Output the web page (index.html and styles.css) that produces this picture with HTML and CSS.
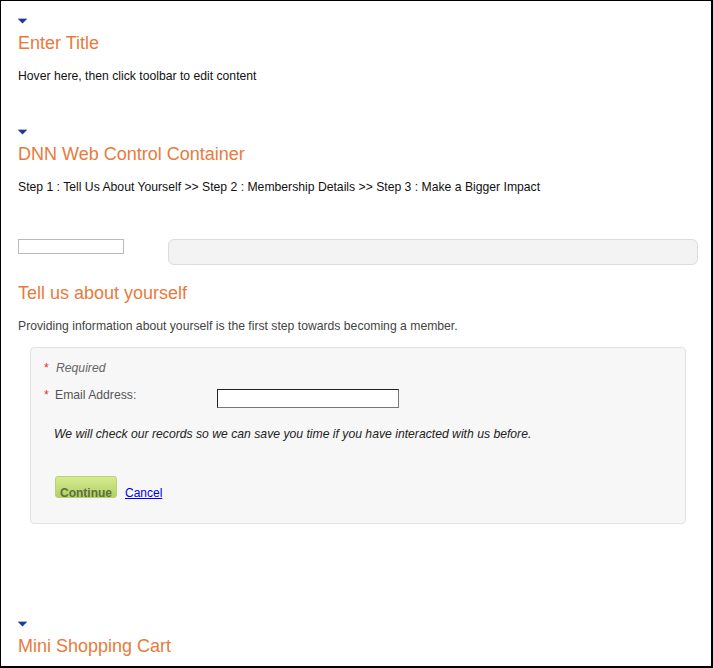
FILE: index.html
```html
<!DOCTYPE html>
<html>
<head>
<meta charset="utf-8">
<link rel="stylesheet" href="styles.css">
</head>
<body>
<div class="page">
  <div class="module">
    <svg class="tri" width="9" height="6" viewBox="0 0 9 6"><rect x="0" y="0" width="9" height="1" fill="#b4b8c8"/><polygon points="0,1 9,1 4.5,5.6" fill="#1b3b9a"/></svg>
    <h2 class="title">Enter Title</h2>
    <p class="text">Hover here, then click toolbar to edit content</p>
  </div>

  <div class="module module-2">
    <svg class="tri" width="9" height="6" viewBox="0 0 9 6"><rect x="0" y="0" width="9" height="1" fill="#b4b8c8"/><polygon points="0,1 9,1 4.5,5.6" fill="#1b3b9a"/></svg>
    <h2 class="title">DNN Web Control Container</h2>
    <p class="text">Step 1 : Tell Us About Yourself &gt;&gt; Step 2 : Membership Details &gt;&gt; Step 3 : Make a Bigger Impact</p>

    <div class="toprow">
      <div class="smallbox"></div>
      <div class="graybar"></div>
    </div>

    <h2 class="title title-tell">Tell us about yourself</h2>
    <p class="text text-gray">Providing information about yourself is the first step towards becoming a member.</p>

    <div class="panel">
      <div class="req"><span class="star">*</span><em>Required</em></div>
      <div class="field">
        <label class="label"><span class="star">*</span>Email Address:</label>
        <input class="input" type="text">
      </div>
      <p class="note">We will check our records so we can save you time if you have interacted with us before.</p>
      <div class="actions">
        <button class="btn" type="button">Continue</button>
        <a class="cancel" href="#">Cancel</a>
      </div>
    </div>
  </div>

  <div class="module module-3">
    <svg class="tri" width="9" height="6" viewBox="0 0 9 6"><rect x="0" y="0" width="9" height="1" fill="#b4b8c8"/><polygon points="0,1 9,1 4.5,5.6" fill="#1b3b9a"/></svg>
    <h2 class="title">Mini Shopping Cart</h2>
  </div>
</div>
</body>
</html>
```

FILE: styles.css
```css
html, body {
  margin: 0;
  padding: 0;
  background: #fff;
}

body {
  font-family: "Liberation Sans", Arial, sans-serif;
  font-size: 12.2px;
  color: #111;
}

.page {
  width: 713px;
  height: 668px;
  box-sizing: border-box;
  border-top: 1px solid #000;
  border-left: 1px solid #000;
  border-right: 2px solid #000;
  border-bottom: 2px solid #000;
  padding: 17px 0 0 17px;
  overflow: hidden;
}

.tri {
  display: block;
}

.title {
  margin: 8px 0 0;
  font-size: 18px;
  line-height: 22px;
  font-weight: normal;
  color: #e97a3c;
}

.text {
  margin: 15px 0 0;
  font-size: 12.2px;
  line-height: 15px;
  color: #111;
}

.text-gray {
  color: #444;
}

.module-2 {
  margin-top: 45px;
}

.toprow {
  display: flex;
  align-items: flex-start;
  margin-top: 44px;
}

.smallbox {
  width: 106px;
  height: 15px;
  box-sizing: border-box;
  border: 1px solid #b9b9b9;
  background: #fff;
  margin-right: 44px;
}

.graybar {
  width: 530px;
  height: 26px;
  box-sizing: border-box;
  border: 1px solid #dcdcdc;
  border-radius: 6px;
  background: #f3f3f3;
}

.title-tell {
  margin-top: 17px;
}

.panel {
  width: 656px;
  box-sizing: border-box;
  margin: 13px 0 0 12px;
  border: 1px solid #e2e2e2;
  border-radius: 4px;
  background: #f7f7f7;
  padding: 13px 0 23px 13px;
}

.req {
  line-height: 15px;
  color: #666;
}

.req em {
  font-style: italic;
}

.star {
  display: inline-block;
  width: 12px;
  color: #e8323a;
}

.field {
  display: flex;
  align-items: flex-start;
  margin-top: 10px;
}

.label {
  width: 173px;
  padding-top: 2px;
  line-height: 15px;
  color: #555;
}

.label .star {
  width: 11px;
}

.input {
  width: 182px;
  height: 19px;
  box-sizing: border-box;
  margin: 3px 0 0;
  padding: 0;
  border: 1px solid #222;
  border-right-color: #777;
  border-bottom-color: #777;
  background: #fff;
}

.note {
  margin: 19px 0 0 10px;
  font-style: italic;
  line-height: 15px;
  color: #222;
}

.actions {
  display: flex;
  align-items: baseline;
  margin: 34px 0 0 11px;
}

.btn {
  width: 62px;
  height: 22px;
  box-sizing: border-box;
  padding: 9px 0 0;
  margin: 0 8px 0 0;
  border: 1px solid #b7d46e;
  border-radius: 3px;
  background: linear-gradient(#d7ea92, #aed260);
  font-family: "Liberation Sans", Arial, sans-serif;
  font-size: 12px;
  font-weight: bold;
  line-height: 14px;
  color: #5f6d45;
  text-align: center;
}

.cancel {
  font-size: 12px;
  color: #0000ee;
  text-decoration: underline;
}

.module-3 {
  margin-top: 97px;
}
```
